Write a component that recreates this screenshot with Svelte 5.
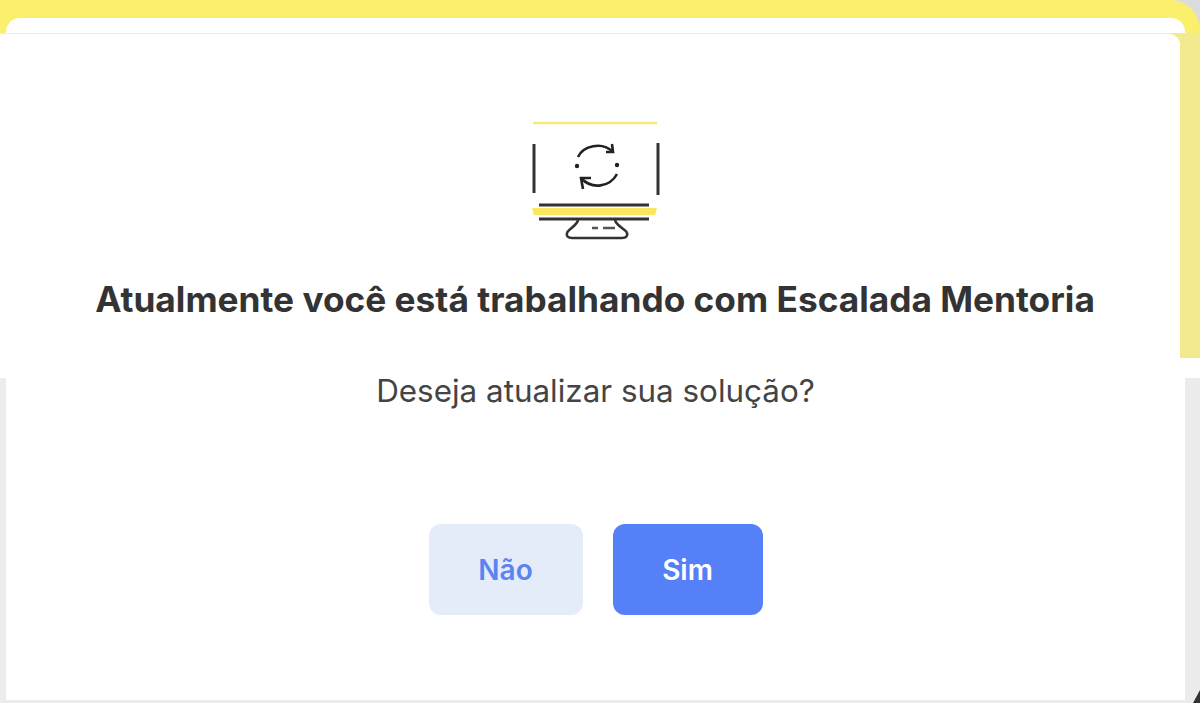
<script>
  let question = "Deseja atualizar sua solução?";
</script>

<div class="page">
  <div class="hero">
    <div class="band"><div class="band-inner"></div></div>
    <div class="panel">
      <svg class="icon" width="134" height="124" viewBox="0 0 134 124" fill="none">
        <path d="M5 4H129" stroke="#f9e97a" stroke-width="2.5" />
        <path d="M6 25V74M130 24V76" stroke="#333" stroke-width="3" />
        <path d="M11 86H121" stroke="#333" stroke-width="3" />
        <path d="M4 89H129L127 96H6Z" fill="#fbe65f" />
        <path d="M11 100H121" stroke="#333" stroke-width="3" />
        <path d="M50 101C49 107 40 110 39 114C38 117 40 119 44 119H94C98 119 100 117 99 114C98 110 88 107 87 101" stroke="#333" stroke-width="2.6" />
        <path d="M64 109H70M75 109H87" stroke="#555" stroke-width="2.4" />
        <circle cx="49" cy="47" r="2.2" fill="#222" />
        <circle cx="89" cy="46" r="2.2" fill="#222" />
        <path d="M50 38C55 27 74 22 85 33" stroke="#222" stroke-width="2.6" />
        <path d="M78 33H85L84 25" stroke="#222" stroke-width="2.6" />
        <path d="M89 55C82 68 64 71 53 59" stroke="#222" stroke-width="2.6" />
        <path d="M63 59H53L55 70" stroke="#222" stroke-width="2.6" />
      </svg>
      <h1>Atualmente você está trabalhando com Escalada Mentoria</h1>
    </div>
  </div>
  <div class="lower">
    <div class="card">
      <p>{question}</p>
      <div class="actions">
        <button class="no">Não</button>
        <button class="yes">Sim</button>
      </div>
    </div>
    <svg class="mark" width="7" height="13" viewBox="0 0 7 13"><path d="M0 13L7 0V13Z" fill="#333" /></svg>
  </div>
</div>

<style>
  :global(body) {
    margin: 0;
    background: #ececec;
  }
  .page {
    width: 1200px;
    height: 703px;
    display: flex;
    flex-direction: column;
    overflow: hidden;
    font-family: "Inter", "Liberation Sans", sans-serif;
    background: #ececec;
  }
  .hero {
    height: 358px;
    display: flex;
    flex-direction: column;
    background: linear-gradient(#dcdcdc 33px, #f3e98e 33px);
  }
  .band {
    height: 33px;
    box-sizing: border-box;
    padding: 18px 15px 0 6px;
    background: #fbf06c;
    border-radius: 0 30px 0 0;
  }
  .band-inner {
    height: 15px;
    background: #fff;
    border-radius: 14px 14px 0 0;
  }
  .panel {
    flex: 1;
    margin-right: 20px;
    background: #fff;
    border-top: 1px solid #fbf3a8;
    border-radius: 0 12px 0 0;
    display: flex;
    flex-direction: column;
    align-items: center;
    box-sizing: border-box;
    padding: 85px 0 0 10px;
  }
  .icon {
    display: block;
  }
  h1 {
    margin: 37px 0 0;
    font-size: 35.25px;
    line-height: 40px;
    font-weight: 700;
    color: #333;
    white-space: nowrap;
  }
  .lower {
    flex: 1;
    position: relative;
    padding: 0 15px 3px 6px;
    display: flex;
    flex-direction: column;
    background: linear-gradient(#fff 20px, #ececec 20px);
  }
  .card {
    flex: 1;
    background: #fff;
    display: flex;
    flex-direction: column;
    align-items: center;
  }
  p {
    margin: 14px 0 0;
    font-size: 31.4px;
    line-height: 38px;
    color: #444;
  }
  .actions {
    display: flex;
    gap: 30px;
    margin-top: 114px;
  }
  button {
    height: 91px;
    border: 0;
    border-radius: 12px;
    font-family: "Inter", "Liberation Sans", sans-serif;
    font-size: 28px;
    font-weight: 600;
  }
  .no {
    width: 154px;
    background: #e5ecf9;
    color: #5b84f1;
  }
  .yes {
    width: 150px;
    background: #5580f8;
    color: #fff;
  }
  .mark {
    position: absolute;
    right: 0;
    bottom: 0;
  }
</style>
